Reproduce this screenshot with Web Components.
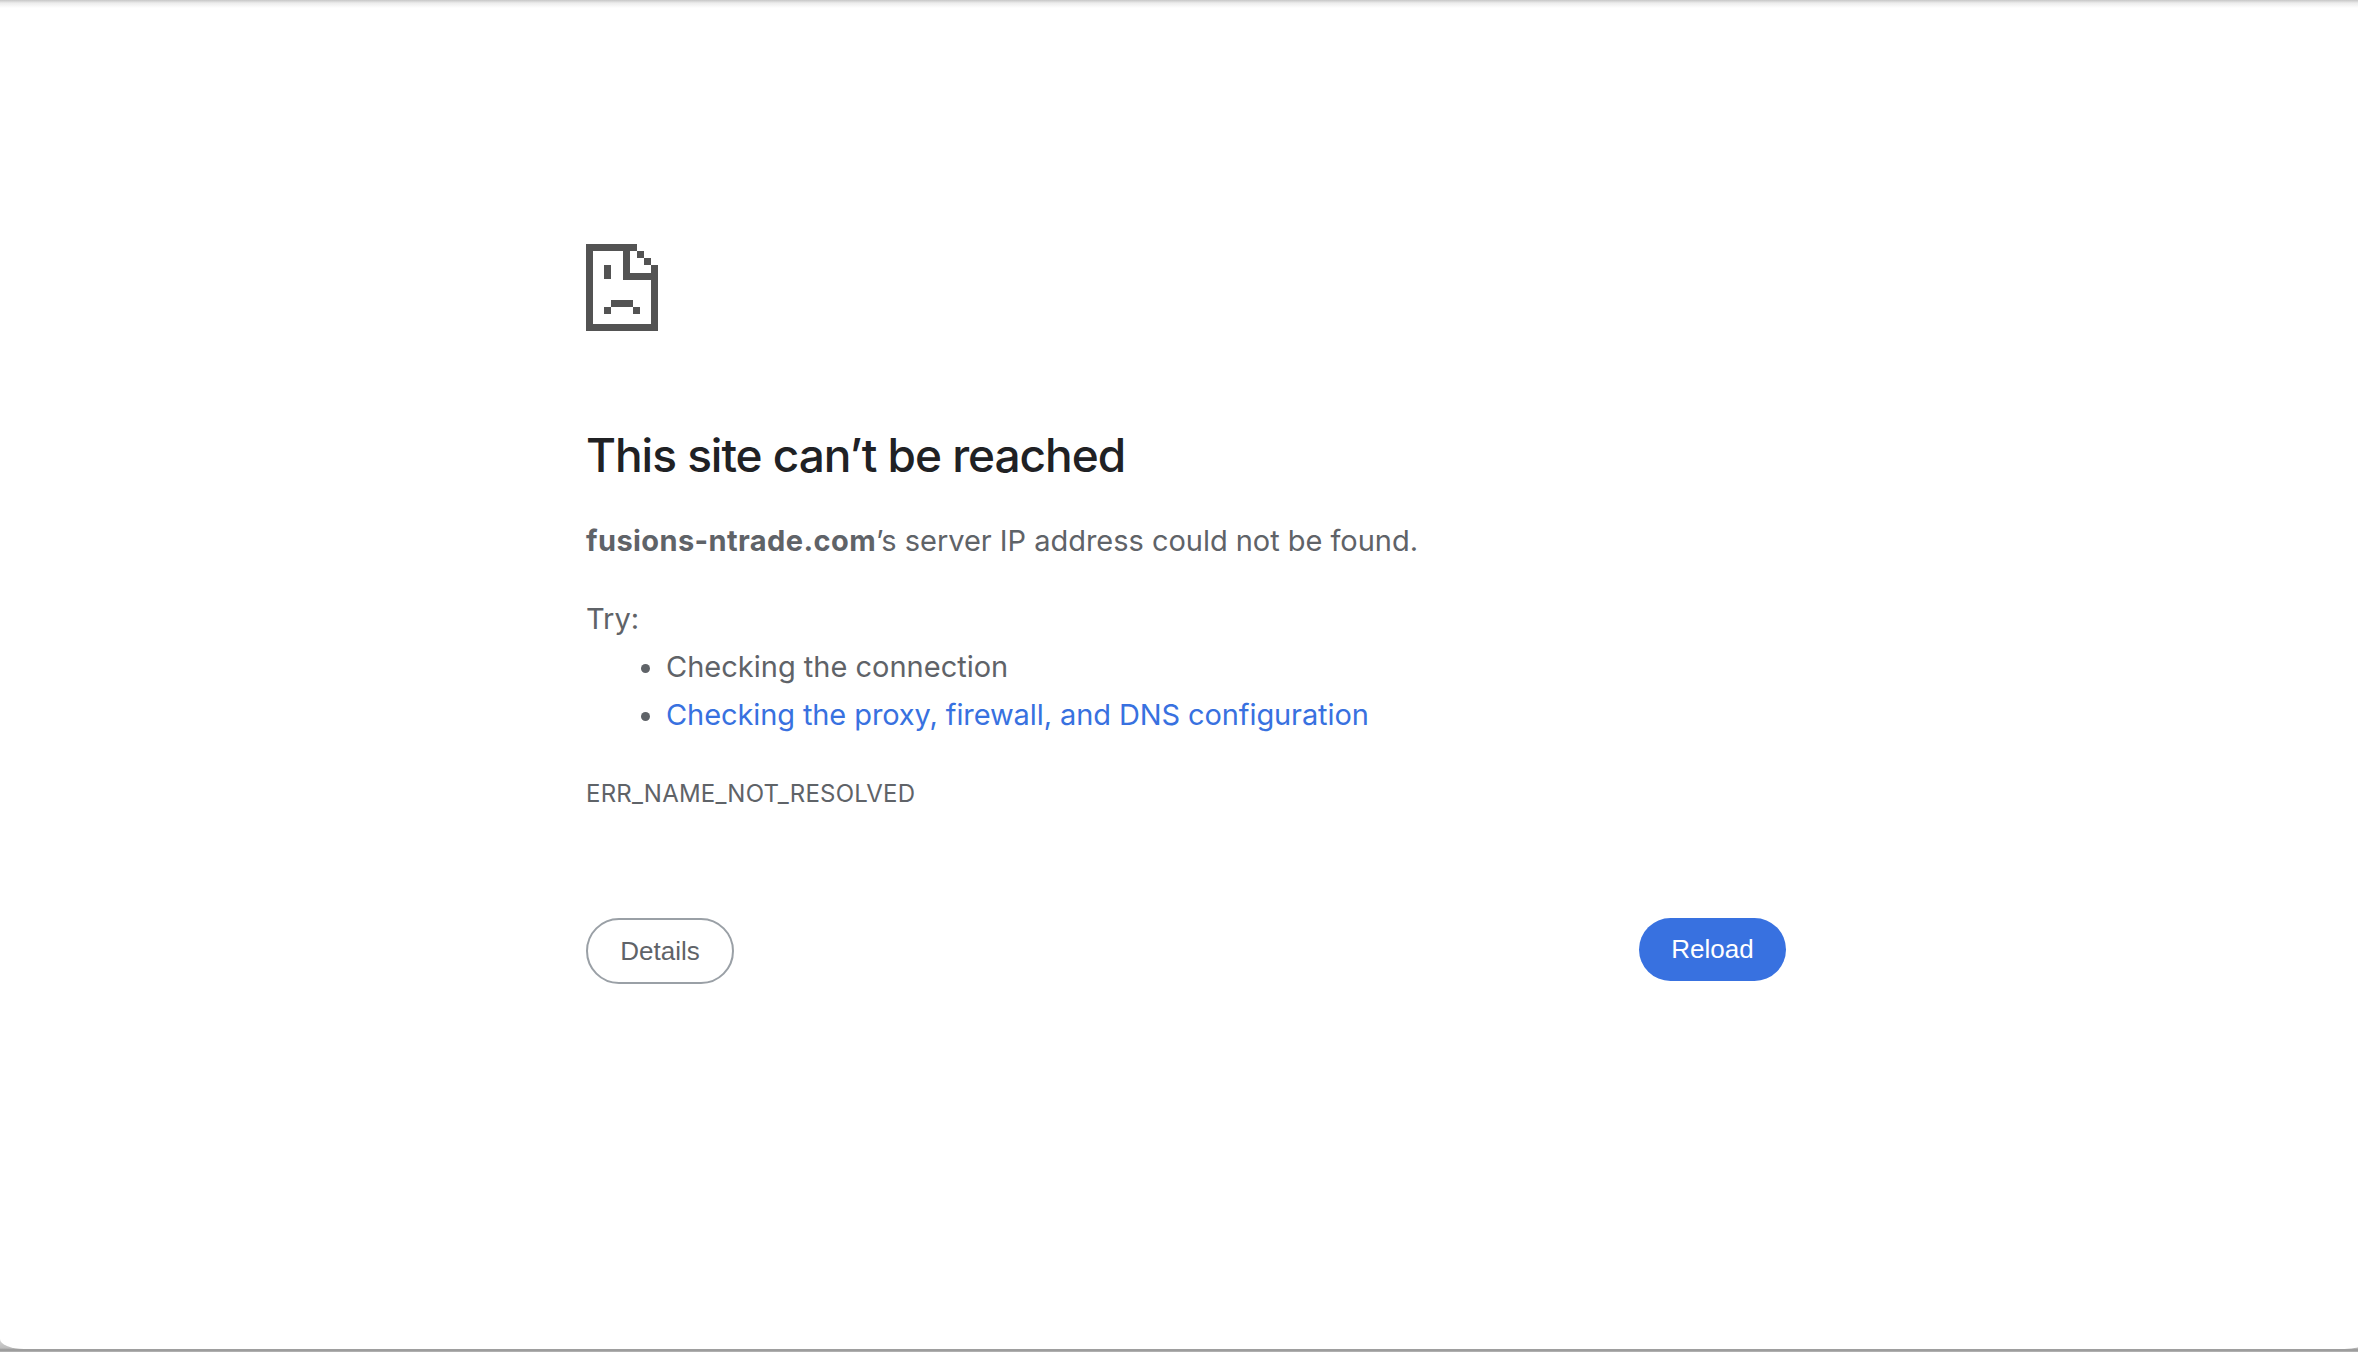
<!DOCTYPE html>
<html lang="en">
<head>
<meta charset="utf-8">
<title>fusions-ntrade.com</title>
<style>
  html, body { margin: 0; height: 100%; background: linear-gradient(#d4d4d4 1340px, #bdbdbd 1348px, #949494 1350px, #b8b8b8 1352px); }
</style>
</head>
<body>
<template id="error-icon-tpl">
  <style>
    :host { display: block; width: 72px; height: 87px; }
    svg { display: block; }
  </style>
  <svg width="72" height="87" viewBox="0 0 72 87" fill="#535353" shape-rendering="crispEdges" aria-hidden="true">
    <rect x="0" y="0" width="51" height="7"/>
    <rect x="0" y="0" width="7" height="87"/>
    <rect x="0" y="80" width="72" height="7"/>
    <rect x="65" y="21" width="7" height="66"/>
    <rect x="37" y="7" width="7" height="29"/>
    <rect x="37" y="29" width="35" height="7"/>
    <rect x="51" y="7" width="7" height="7"/>
    <rect x="58" y="14" width="7" height="7"/>
    <rect x="18" y="21" width="7" height="14"/>
    <rect x="25" y="56" width="22" height="7"/>
    <rect x="18" y="63" width="7" height="7"/>
    <rect x="47" y="63" width="7" height="7"/>
  </svg>
</template>

<template id="pill-button-tpl">
  <style>
    :host { display: block; }
    button {
      display: block;
      box-sizing: border-box;
      width: 147px;
      height: 63px;
      padding: 0;
      border: 0;
      border-radius: 32px;
      background: #3871e0;
      color: #fff;
      font: 26px "Liberation Sans", Arial, sans-serif;
    }
    :host([outline]) button {
      width: 148px;
      height: 66px;
      background: #fff;
      border: 2px solid #9aa0a6;
      border-radius: 33px;
      color: #5f6368;
    }
  </style>
  <button type="button"><slot></slot></button>
</template>

<template id="error-page-tpl">
  <style>
    :host {
      display: block;
      box-sizing: border-box;
      height: 1349px;
      padding: 244px 0 0 586px;
      background: linear-gradient(#c6c6c6, #ececec 3px, #fff 8px);
      border-radius: 0 0 22px 24px / 0 0 2px 10px;
      font-family: Inter, "Liberation Sans", sans-serif;
      color: #5f6368;
    }
    .column { width: 1200px; }
    h1 {
      margin: 94px 0 0;
      font-size: 46px;
      line-height: 60px;
      font-weight: 500;
      letter-spacing: -1.04px;
      color: #202124;
    }
    .msg { margin: 32px 0 0; font-size: 29px; line-height: 48px; letter-spacing: -0.03px; }
    .msg strong { letter-spacing: 0.4px; }
    .try { margin: 30px 0 0; font-size: 29px; line-height: 48px; }
    ul { margin: 0; padding: 0 0 0 80px; font-size: 29px; line-height: 48px; }
    a { color: #3871e0; text-decoration: none; letter-spacing: -0.1px; }
    .code { margin-top: 31px; font-size: 24px; line-height: 48px; letter-spacing: 0.2px; text-transform: uppercase; }
    .actions { display: flex; justify-content: space-between; margin-top: 100px; }
  </style>
  <div class="column">
    <error-icon></error-icon>
    <h1>This site can’t be reached</h1>
    <p class="msg"><strong>fusions-ntrade.com</strong>’s server IP address could not be found.</p>
    <div class="try">Try:</div>
    <ul>
      <li>Checking the connection</li>
      <li><a href="#">Checking the proxy, firewall, and DNS configuration</a></li>
    </ul>
    <div class="code">ERR_NAME_NOT_RESOLVED</div>
    <div class="actions">
      <pill-button outline>Details</pill-button>
      <pill-button>Reload</pill-button>
    </div>
  </div>
</template>

<error-page></error-page>

<script>
  // each element just clones its template into an open shadow root
  function defineFromTemplate(name, tplId) {
    customElements.define(name, class extends HTMLElement {
      constructor() {
        super();
        this.attachShadow({ mode: 'open' });
        this.shadowRoot.appendChild(document.getElementById(tplId).content.cloneNode(true));
      }
    });
  }

  defineFromTemplate('error-icon', 'error-icon-tpl');
  defineFromTemplate('pill-button', 'pill-button-tpl');
  defineFromTemplate('error-page', 'error-page-tpl');
</script>
</body>
</html>
